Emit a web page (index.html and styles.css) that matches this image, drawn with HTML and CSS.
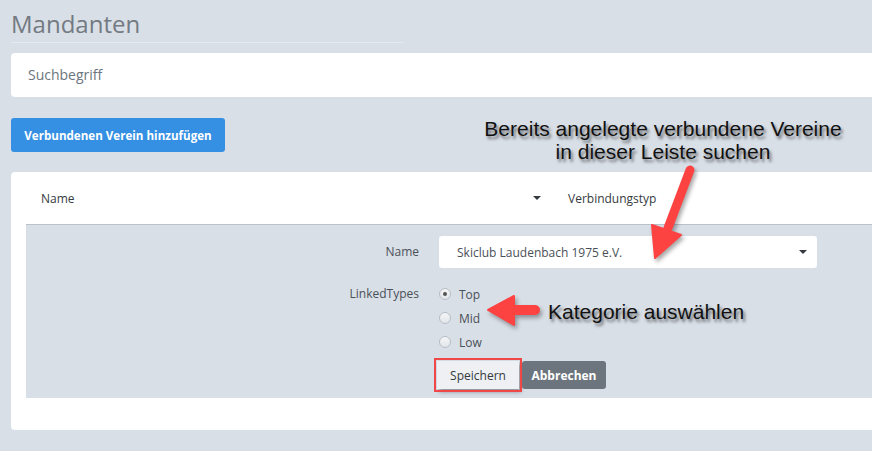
FILE: index.html
```html
<!DOCTYPE html>
<html>
<head>
    <title>Mandanten</title>
    <link rel="stylesheet" href="styles.css">
</head>
<body>
    <div class="page">
        <h1 class="title">Mandanten</h1>

        <div class="search">Suchbegriff</div>

        <button class="btn-primary">Verbundenen Verein hinzufügen</button>

        <div class="card">
            <div class="table-head">
                <div class="col-name">
                    <span>Name</span>
                    <span class="caret"></span>
                </div>
                <div class="col-type">Verbindungstyp</div>
            </div>

            <div class="edit-row">
                <div class="form-row">
                    <div class="form-label">Name</div>
                    <div class="select">
                        <span>Skiclub Laudenbach 1975 e.V.</span>
                        <span class="caret"></span>
                    </div>
                </div>

                <div class="form-row radios-row">
                    <div class="form-label">LinkedTypes</div>
                    <div class="radios">
                        <label class="radio"><span class="dot checked"></span>Top</label>
                        <label class="radio"><span class="dot"></span>Mid</label>
                        <label class="radio"><span class="dot"></span>Low</label>
                    </div>
                </div>

                <div class="form-row actions">
                    <div class="form-label"></div>
                    <div class="buttons">
                        <button class="btn-save">Speichern</button>
                        <button class="btn-cancel">Abbrechen</button>
                    </div>
                </div>
            </div>
        </div>
    </div>

    <!-- hinweise -->
    <div class="note note-search">Bereits angelegte verbundene Vereine<br>in dieser Leiste suchen</div>
    <div class="note note-type">Kategorie auswählen</div>

    <svg class="arrows" width="872" height="451" viewBox="0 0 872 451">
        <g fill="#fd4242" stroke="#fd4242" stroke-linecap="round" stroke-linejoin="round">
            <line x1="690" y1="170" x2="668" y2="228" stroke-width="9"/>
            <polygon points="655,258 652,225 681,235" stroke-width="2"/>
            <line x1="535" y1="310" x2="510" y2="310" stroke-width="10"/>
            <polygon points="488,310 514,296 514,325" stroke-width="2"/>
        </g>
    </svg>
</body>
</html>
```

FILE: styles.css
```css
body {
    margin: 0;
    background-color: #d9dfe7;
    font-family: "Open Sans", "Noto Sans", sans-serif;
    color: #343a40;
    width: 872px;
    height: 451px;
    overflow: hidden;
    position: relative;
}
.page {
    padding-left: 11px;
    width: 900px;
}
.title {
    margin: 0;
    padding-top: 7px;
    width: 393px;
    height: 35px;
    font-size: 24px;
    font-weight: 400;
    line-height: 34px;
    color: #737a82;
    border-bottom: 1px solid #e6eaef;
}
.search {
    margin-top: 10px;
    height: 44px;
    line-height: 44px;
    padding-left: 17px;
    background-color: white;
    border-radius: 4px;
    font-size: 14px;
    color: #6c757d;
}
.btn-primary {
    margin-top: 21px;
    height: 34px;
    width: 214px;
    padding: 0;
    border: none;
    border-radius: 3px;
    background-color: #3590e3;
    color: white;
    font-family: "Open Sans", sans-serif;
    font-size: 11.6px;
    font-weight: 700;
    display: block;
}
.card {
    margin-top: 20px;
    background-color: white;
    border-radius: 4px;
    padding: 0 0 32px 15px;
}
.table-head {
    display: flex;
    height: 52px;
    align-items: center;
    border-bottom: 1px solid #b9c3cd;
    font-size: 12px;
    color: #343a40;
}
.col-name {
    width: 500px;
    padding-left: 15px;
    display: flex;
    justify-content: space-between;
    align-items: center;
}
.col-type {
    padding-left: 27px;
}
.caret {
    width: 0;
    height: 0;
    border-left: 4px solid transparent;
    border-right: 4px solid transparent;
    border-top: 4px solid #343a40;
}
.edit-row {
    background-color: #d9dfe7;
    padding: 11px 0 9px 0;
}
.form-row {
    display: flex;
    gap: 20px;
    font-size: 12px;
}
.form-label {
    width: 393px;
    text-align: right;
    color: #495057;
}
.form-row:first-child .form-label {
    line-height: 32px;
}
.select {
    width: 378px;
    height: 32px;
    background-color: white;
    border-radius: 3px;
    display: flex;
    justify-content: space-between;
    align-items: center;
    padding: 0 10px 0 18px;
    box-sizing: border-box;
    color: #495057;
}
.radios-row {
    margin-top: 18px;
}
.radios-row .form-label {
    line-height: 16px;
}
.radios {
    display: flex;
    flex-direction: column;
    gap: 8px;
}
.radio {
    display: flex;
    align-items: center;
    gap: 8px;
    height: 16px;
    color: #495057;
}
.dot {
    width: 10px;
    height: 10px;
    border-radius: 50%;
    border: 1px solid #b8bec5;
    background: linear-gradient(#f4f5f7, #e2e5e9);
    position: relative;
}
.dot.checked::after {
    content: "";
    position: absolute;
    left: 3px;
    top: 3px;
    width: 4px;
    height: 4px;
    border-radius: 50%;
    background-color: #555;
}
.actions {
    margin-top: 11px;
    gap: 18px;
}
.buttons {
    display: flex;
    gap: 3px;
}
.buttons button {
    height: 28px;
    border: none;
    border-radius: 3px;
    font-family: "Open Sans", sans-serif;
    font-size: 12px;
    padding: 0;
}
.btn-save {
    width: 82px;
    background-color: #eef0f3;
    color: #343a40;
    outline: 2px solid #f04848;
    outline-offset: 1px;
    box-shadow: 2px 3px 4px rgba(0, 0, 0, 0.35);
}
.buttons .btn-save {
    border-radius: 0;
}
.btn-cancel {
    width: 84px;
    background-color: #6c757d;
    color: white;
    font-weight: 700;
}
.note {
    position: absolute;
    font-family: "Liberation Sans", Arial, sans-serif;
    font-size: 21px;
    line-height: 23px;
    color: #111;
    text-shadow: 2px 3px 3px rgba(0, 0, 0, 0.5);
    text-align: center;
}
.note-search {
    left: 463px;
    top: 117px;
    width: 400px;
}
.note-type {
    left: 548px;
    top: 300px;
}
.arrows {
    position: absolute;
    left: 0;
    top: 0;
    filter: drop-shadow(2px 3px 2px rgba(0, 0, 0, 0.35));
}
```
